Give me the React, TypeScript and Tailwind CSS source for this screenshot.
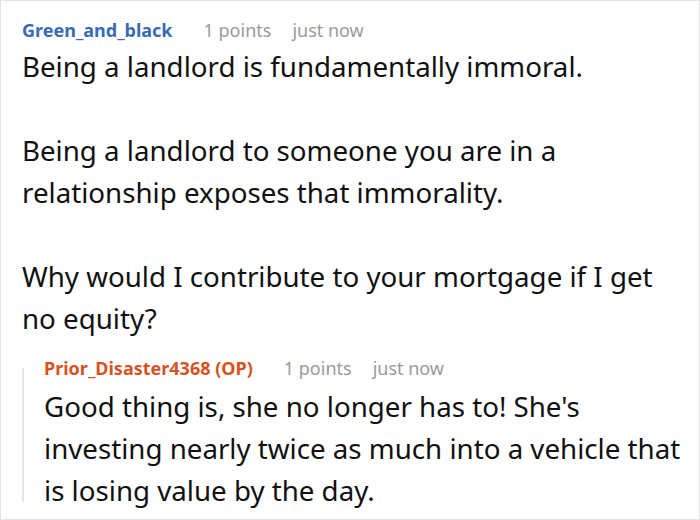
import React from 'react';

const font = { fontFamily: '"Noto Sans", "Open Sans", sans-serif' };

const Meta: React.FC<{ author: string; op?: boolean }> = ({ author, op }) => (
  <div className="flex items-center text-[18px] leading-[24px]">
    <span className={`font-bold ${op ? 'text-[#d4531f]' : 'text-[#3a6bb7]'}`}>{author}</span>
    <span className="ml-[31px] text-[#9a9a9a]">1 points</span>
    <span className="ml-[21px] text-[#9a9a9a]">just now</span>
  </div>
);

const App: React.FC = () => {
  return (
    <div style={font} className="w-[700px] h-[520px] bg-white border border-[#e3e3e3] overflow-hidden">
      <div className="pl-[21px] pt-[17px]">
        <Meta author="Green_and_black" />
        <div className="text-[27.7px] leading-[42px] text-[#111] mt-[3px] pr-[20px]">
          <p>Being a landlord is fundamentally immoral.</p>
          <p className="mt-[42px]">Being a landlord to someone you are in a relationship exposes that immorality.</p>
          <p className="mt-[42px]">Why would I contribute to your mortgage if I get no equity?</p>
        </div>

        {/* OP reply, indented with a thread line */}
        <div className="mt-[17px] flex">
          <div className="w-[2px] shrink-0 bg-[#e6e6e6] mt-[12px] mb-[9px]" />
          <div className="pl-[20px]">
            <Meta author="Prior_Disaster4368 (OP)" op />
            <p className="mt-[5px] text-[27.7px] leading-[42px] text-[#111]">
              Good thing is, she no longer has to! She's investing nearly twice as much into a vehicle that is losing value by the day.
            </p>
          </div>
        </div>
      </div>
    </div>
  );
};

export default App;
